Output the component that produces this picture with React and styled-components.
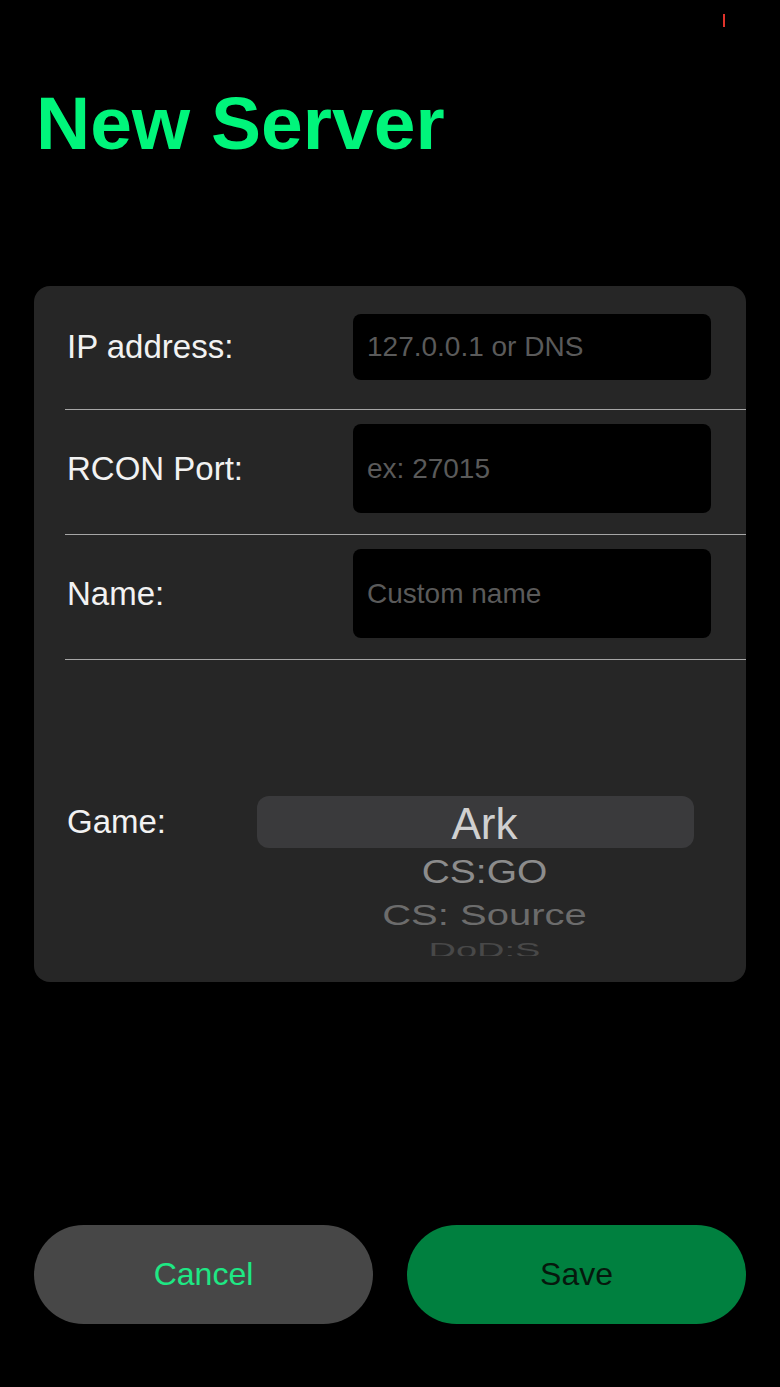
import React from 'react';
import styled, { createGlobalStyle } from 'styled-components';

const GlobalStyle = createGlobalStyle`
    html, body {
        margin: 0;
        padding: 0;
        background: #000000;
        font-family: 'Liberation Sans', Arial, sans-serif;
    }
`;

const Page = styled.div`
    position: relative;
    width: 780px;
    height: 1387px;
    background: #000000;
    padding: 86px 34px 0 34px;
    box-sizing: border-box;
`;

const StatusMark = styled.div`
    position: absolute;
    top: 14px;
    left: 723px;
    width: 2px;
    height: 13px;
    background: #e0332b;
`;

const Title = styled.h1`
    margin: 0 0 0 2px;
    color: #00f57b;
    font-size: 75px;
    line-height: 75px;
    font-weight: 700;
`;

const Card = styled.div`
    margin-top: 125px;
    background: #262626;
    border-radius: 16px;
    padding: 0 0 26px 31px;
    display: flex;
    flex-direction: column;
`;

const Row = styled.div`
    display: flex;
    align-items: center;
    padding: ${p => p.$pad};
    border-bottom: 1.5px solid #a6a6a6;
`;

const Label = styled.label`
    flex: 1;
    padding-left: 2px;
    color: #f2f2f2;
    font-size: 33px;
`;

const Input = styled.input`
    width: 358px;
    height: ${p => p.$h}px;
    margin-right: 35px;
    box-sizing: border-box;
    background: #000000;
    border: none;
    border-radius: 8px;
    padding: 0 14px;
    color: #ffffff;
    font-family: 'Liberation Sans', Arial, sans-serif;
    font-size: 28px;
    outline: none;
    &::placeholder { color: #5a5a5a; }
`;

const GameRow = styled.div`
    display: grid;
    grid-template-columns: 192px 437px;
    padding-top: 136px;
`;

const GameLabel = styled.label`
    padding-left: 2px;
    line-height: 52px;
    height: 52px;
    color: #f2f2f2;
    font-size: 33px;
`;

const Wheel = styled.div`
    display: flex;
    flex-direction: column;
    height: 160px;
    overflow: hidden;
`;

const Selected = styled.div`
    height: 52px;
    flex-shrink: 0;
    border-radius: 12px;
    background: #3a3a3c;
    display: flex;
    align-items: center;
    justify-content: center;
    padding: 3px 0 0 18px;
    box-sizing: border-box;
    color: #d0d0d0;
    font-size: 44px;
`;

const Option = styled.div`
    height: ${p => p.$h}px;
    flex-shrink: 0;
    display: flex;
    align-items: center;
    justify-content: center;
    padding-left: 18px;
    color: ${p => p.$color};
    font-size: ${p => p.$size}px;
    transform: scaleY(${p => p.$squash});
    white-space: nowrap;
`;

const Buttons = styled.div`
    margin-top: 243px;
    display: flex;
    gap: 34px;
`;

const Button = styled.button`
    flex: 1;
    height: 99px;
    border: none;
    border-radius: 50px;
    background: ${p => p.$bg};
    color: ${p => p.$fg};
    font-family: 'Liberation Sans', Arial, sans-serif;
    font-size: 32px;
    cursor: pointer;
`;

const OPTIONS = [
    { name: 'CS:GO', h: 48, size: 39, color: '#8c8c8c', squash: 0.84 },
    { name: 'CS: Source', h: 39, size: 40, color: '#6c6c6c', squash: 0.72 },
    { name: 'DoD:S', h: 30, size: 38, color: '#484848', squash: 0.55 },
];

const App = () => (
    <Page>
        <GlobalStyle />
        <StatusMark />
        <Title>New Server</Title>
        <Card>
            <Row $pad="28px 0 29px 0">
                <Label>IP address:</Label>
                <Input $h={66} placeholder="127.0.0.1 or DNS" />
            </Row>
            <Row $pad="14px 0 21px 0">
                <Label>RCON Port:</Label>
                <Input $h={89} placeholder="ex: 27015" />
            </Row>
            <Row $pad="14px 0 21px 0">
                <Label>Name:</Label>
                <Input $h={89} placeholder="Custom name" />
            </Row>
            <GameRow>
                <GameLabel>Game:</GameLabel>
                <Wheel>
                    <Selected>Ark</Selected>
                    {OPTIONS.map(o => (
                        <Option key={o.name} $h={o.h} $size={o.size} $color={o.color} $squash={o.squash}>
                            {o.name}
                        </Option>
                    ))}
                </Wheel>
            </GameRow>
        </Card>
        <Buttons>
            <Button $bg="#474747" $fg="#1ee884">Cancel</Button>
            <Button $bg="#00803f" $fg="#06180d">Save</Button>
        </Buttons>
    </Page>
);

export default App;
